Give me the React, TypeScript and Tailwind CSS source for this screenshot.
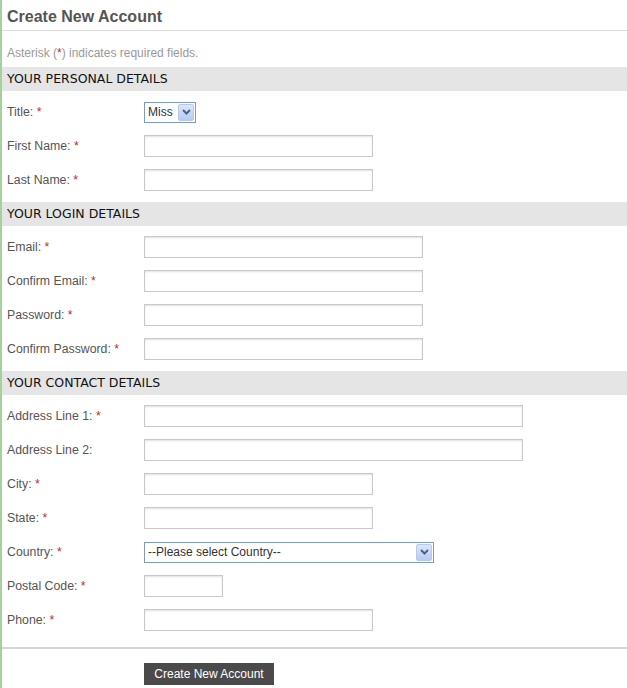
const font = { fontFamily: '"Liberation Sans", Arial, sans-serif' };

type Field = { label: string; required?: boolean; width: number; kind?: "select"; value?: string };

const sections: { title: string; fields: Field[] }[] = [
  {
    title: "Your Personal Details",
    fields: [
      { label: "Title:", required: true, width: 52, kind: "select", value: "Miss" },
      { label: "First Name:", required: true, width: 229 },
      { label: "Last Name:", required: true, width: 229 },
    ],
  },
  {
    title: "Your Login Details",
    fields: [
      { label: "Email:", required: true, width: 279 },
      { label: "Confirm Email:", required: true, width: 279 },
      { label: "Password:", required: true, width: 279 },
      { label: "Confirm Password:", required: true, width: 279 },
    ],
  },
  {
    title: "Your Contact Details",
    fields: [
      { label: "Address Line 1:", required: true, width: 379 },
      { label: "Address Line 2:", width: 379 },
      { label: "City:", required: true, width: 229 },
      { label: "State:", required: true, width: 229 },
      { label: "Country:", required: true, width: 290, kind: "select", value: "--Please select Country--" },
      { label: "Postal Code:", required: true, width: 79 },
      { label: "Phone:", required: true, width: 229 },
    ],
  },
];

function SelectBox({ width, value }: { width: number; value: string }) {
  return (
    <div
      className="flex items-center h-[21px] border border-[#7f9db9] bg-white text-[12px] text-[#333]"
      style={{ width }}
    >
      <span className="flex-1 pl-[3px] truncate">{value}</span>
      <span className="mr-[1px] flex h-[17px] w-[16px] items-center justify-center rounded-[2px] border border-[#b9c9e8] bg-gradient-to-b from-[#dbe6fb] to-[#b6cbf2]">
        <svg width="9" height="6" viewBox="0 0 9 6">
          <path d="M1 1l3.5 3.5L8 1" fill="none" stroke="#4d6185" strokeWidth="2" />
        </svg>
      </span>
    </div>
  );
}

function Row({ f }: { f: Field }) {
  return (
    <div className="flex items-center h-[34px]">
      <div className="w-[142px] pl-[5px] text-[12.3px] text-[#555]">
        {f.label} {f.required && <span className="text-[#c0272d]">*</span>}
      </div>
      {f.kind === "select" ? (
        <SelectBox width={f.width} value={f.value ?? ""} />
      ) : (
        <input
          className="h-[22px] border border-[#c9c9c9] bg-white shadow-[inset_0_1px_2px_rgba(0,0,0,0.12)] outline-none"
          style={{ width: f.width }}
        />
      )}
    </div>
  );
}

export default function App() {
  return (
    <div className="min-h-[688px] w-[627px] border-l-2 border-[#a8cf9e] bg-white" style={font}>
      <div className="h-[31px] border-b border-[#dcdcdc] pl-[5px] pt-[5px] text-[16px] font-bold text-[#555]">
        Create New Account
      </div>
      <div className="h-[36px] pl-[5px] pt-[13px] text-[12px] text-[#999]">
        Asterisk (<span className="text-[#c0272d]">*</span>) indicates required fields.
      </div>
      {sections.map((s) => (
        <div key={s.title} className="mb-[5px]">
          <div
            className="flex h-[24px] items-center bg-[#e5e5e5] pl-[5px] text-[12.5px] uppercase text-[#111]"
            style={{ fontFamily: '"DejaVu Sans", Verdana, sans-serif' }}
          >
            {s.title}
          </div>
          <div className="pt-[4px]">
            {s.fields.map((f) => (
              <Row key={f.label} f={f} />
            ))}
          </div>
        </div>
      ))}
      <div className="mt-[10px] border-t-2 border-[#d6d6d6]" />
      <div className="pt-[12px] pl-[142px]">
        <button className="h-[22px] w-[130px] bg-[#4a4a4a] text-[12px] text-white">Create New Account</button>
      </div>
    </div>
  );
}
